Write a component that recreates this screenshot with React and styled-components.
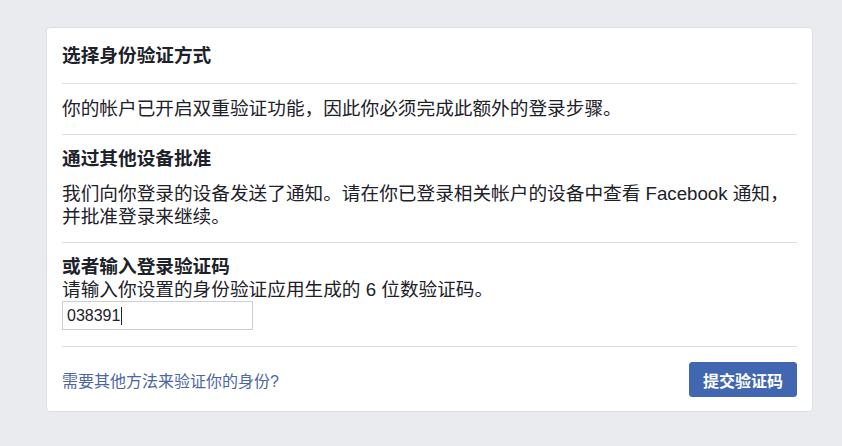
import React from "react";
import styled, { createGlobalStyle } from "styled-components";

const Global = createGlobalStyle`
  html, body { margin: 0; padding: 0; background: #e9ebee; }
  body {
    font-family: "Liberation Sans", "Noto Sans CJK SC", Arial, sans-serif;
    color: #1d2129;
    -webkit-font-smoothing: antialiased;
  }
`;

const Page = styled.div`
  padding: 27px 0 34px 46px;
`;

const Card = styled.div`
  background: #fff;
  border: 1px solid #dddfe2;
  border-radius: 4px;
  padding: 0 15px;
  box-sizing: content-box;
  width: 735px;
`;

const Section = styled.div`
  padding: ${(p) => p.$pad};
  border-top: ${(p) => (p.$first ? "none" : "1px solid #dadde1")};
  display: flex;
  flex-direction: column;
  gap: ${(p) => p.$gap || "0px"};
`;

const Heading = styled.h2`
  margin: 0;
  font-size: 18.67px;
  line-height: ${(p) => p.$lh || "24px"};
  font-weight: bold;
  color: #1d2129;
`;

const Text = styled.p`
  margin: 0;
  font-size: 18.67px;
  line-height: ${(p) => p.$lh || "24px"};
  color: #1d2129;
`;

const CodeField = styled.div`
  position: relative;
  width: 191px;
  height: 29px;
`;

const CodeInput = styled.input`
  width: 100%;
  height: 100%;
  box-sizing: border-box;
  border: 1px solid #ccd0d5;
  border-radius: 0;
  padding: 0 4px;
  font-family: "Liberation Sans", Arial, sans-serif;
  font-size: 16px;
  color: #1d2129;
  outline: none;
  caret-color: transparent;
  background: #fff;
`;

const Caret = styled.span`
  position: absolute;
  top: 6px;
  height: 18px;
  width: 1px;
  background: #1d2129;
`;

const Footer = styled.div`
  border-top: 1px solid #dadde1;
  padding: 15px 0 14px;
  display: flex;
  align-items: center;
  justify-content: space-between;
`;

const HelpLink = styled.a`
  font-size: 16px;
  color: #4b67a1;
  text-decoration: none;
  cursor: pointer;
`;

const SubmitButton = styled.button`
  height: 35px;
  padding: 0 13px;
  background: #4267b2;
  border: 1px solid #4267b2;
  border-radius: 3px;
  color: #fff;
  font-family: "Liberation Sans", "Noto Sans CJK SC", Arial, sans-serif;
  font-size: 16px;
  font-weight: bold;
  cursor: pointer;
`;

export default function App() {
  return (
    <>
      <Global />
      <Page>
        <Card>
          <Section $first $pad="16px 0 15px">
            <Heading>选择身份验证方式</Heading>
          </Section>
          <Section $pad="13px 0 13px">
            <Text>你的帐户已开启双重验证功能，因此你必须完成此额外的登录步骤。</Text>
          </Section>
          <Section $pad="12px 0 14px" $gap="12px">
            <Heading $lh="23px">通过其他设备批准</Heading>
            <Text $lh="23px">
              我们向你登录的设备发送了通知。请在你已登录相关帐户的设备中查看 Facebook 通知，并批准登录来继续。
            </Text>
          </Section>
          <Section $pad="12px 0 16px">
            <Heading $lh="23px">或者输入登录验证码</Heading>
            <Text $lh="23px">请输入你设置的身份验证应用生成的 6 位数验证码。</Text>
            <CodeField>
              <CodeInput defaultValue="038391" readOnly />
              <Caret style={{ left: "59px" }} />
            </CodeField>
          </Section>
          <Footer>
            <HelpLink>需要其他方法来验证你的身份?</HelpLink>
            <SubmitButton>提交验证码</SubmitButton>
          </Footer>
        </Card>
      </Page>
    </>
  );
}
